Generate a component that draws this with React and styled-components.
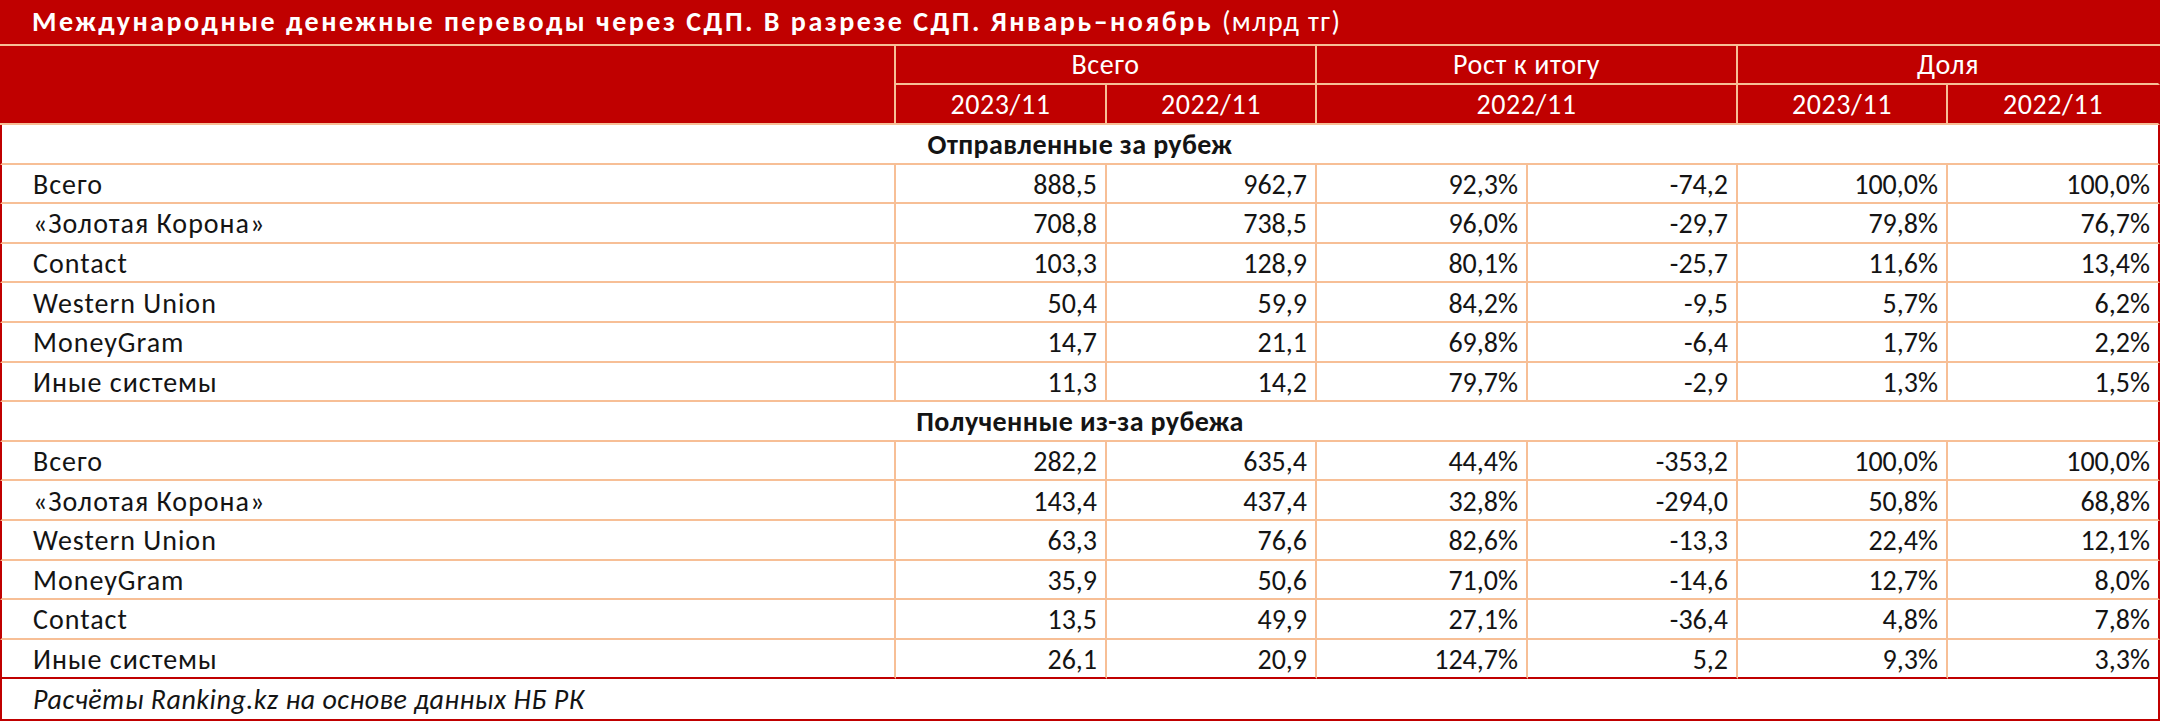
import React from "react";
import styled, { createGlobalStyle } from "styled-components";

const RED = "#c00000";
const PEACH = "#f7bf96";

const GlobalStyle = createGlobalStyle`
  html, body {
    margin: 0;
    padding: 0;
    background: #ffffff;
  }
`;

const Table = styled.table`
  width: 2160px;
  border-collapse: separate;
  border-spacing: 0;
  table-layout: fixed;
  font-family: Calibri, Carlito, "Open Sans", "Liberation Sans", sans-serif;
  font-size: 28px;
  color: #141414;
`;

const TitleCell = styled.th`
  box-sizing: border-box;
  height: 46px;
  padding: 0 0 2px 32px;
  background: ${RED};
  color: #ffffff;
  text-align: left;
  font-weight: 700;
  font-size: 28px;
  letter-spacing: 2.5px;
  border-bottom: 2px solid ${PEACH};
  white-space: nowrap;

  span {
    font-weight: 400;
    letter-spacing: 1.4px;
  }
`;

const HeadCell = styled.th`
  box-sizing: border-box;
  height: ${(p) => p.$h || 39}px;
  padding: 0;
  background: ${RED};
  color: #ffffff;
  font-weight: 400;
  letter-spacing: 0.6px;
  text-align: center;
  vertical-align: middle;
  border-right: 2px solid ${(p) => (p.$last ? RED : PEACH)};
  border-bottom: 2px solid ${PEACH};
`;

const SectionCell = styled.td`
  box-sizing: border-box;
  height: 39.6px;
  padding: 2px 0 0;
  font-weight: 700;
  letter-spacing: 0.4px;
  text-align: center;
  border-left: 2px solid ${RED};
  border-right: 2px solid ${RED};
  border-bottom: 2px solid ${PEACH};
`;

const LabelCell = styled.td`
  box-sizing: border-box;
  height: 39.6px;
  padding: 2px 0 0 31px;
  text-align: left;
  letter-spacing: 1px;
  white-space: nowrap;
  border-left: 2px solid ${RED};
  border-right: 2px solid ${PEACH};
  border-bottom: 2px solid ${(p) => (p.$end ? RED : PEACH)};
`;

const NumCell = styled.td`
  box-sizing: border-box;
  height: 39.6px;
  padding: 2px 8px 0 0;
  text-align: right;
  white-space: nowrap;
  border-right: 2px solid ${(p) => (p.$last ? RED : PEACH)};
  border-bottom: 2px solid ${(p) => (p.$end ? RED : PEACH)};
`;

const FootCell = styled.td`
  box-sizing: border-box;
  height: 42px;
  padding: 0 0 0 31px;
  font-style: italic;
  letter-spacing: 0.5px;
  text-align: left;
  border-left: 2px solid ${RED};
  border-right: 2px solid ${RED};
  border-bottom: 2px solid ${RED};
`;

const sent = [
  ["Всего", "888,5", "962,7", "92,3%", "-74,2", "100,0%", "100,0%"],
  ["«Золотая Корона»", "708,8", "738,5", "96,0%", "-29,7", "79,8%", "76,7%"],
  ["Contact", "103,3", "128,9", "80,1%", "-25,7", "11,6%", "13,4%"],
  ["Western Union", "50,4", "59,9", "84,2%", "-9,5", "5,7%", "6,2%"],
  ["MoneyGram", "14,7", "21,1", "69,8%", "-6,4", "1,7%", "2,2%"],
  ["Иные системы", "11,3", "14,2", "79,7%", "-2,9", "1,3%", "1,5%"],
];

const received = [
  ["Всего", "282,2", "635,4", "44,4%", "-353,2", "100,0%", "100,0%"],
  ["«Золотая Корона»", "143,4", "437,4", "32,8%", "-294,0", "50,8%", "68,8%"],
  ["Western Union", "63,3", "76,6", "82,6%", "-13,3", "22,4%", "12,1%"],
  ["MoneyGram", "35,9", "50,6", "71,0%", "-14,6", "12,7%", "8,0%"],
  ["Contact", "13,5", "49,9", "27,1%", "-36,4", "4,8%", "7,8%"],
  ["Иные системы", "26,1", "20,9", "124,7%", "5,2", "9,3%", "3,3%"],
];

function DataRows({ rows, end }) {
  return rows.map((row, i) => {
    const isEnd = end && i === rows.length - 1;
    return (
      <tr key={i}>
        <LabelCell $end={isEnd}>{row[0]}</LabelCell>
        {row.slice(1).map((v, j) => (
          <NumCell key={j} $end={isEnd} $last={j === 5}>
            {v}
          </NumCell>
        ))}
      </tr>
    );
  });
}

export default function App() {
  return (
    <>
      <GlobalStyle />
      <Table>
        <colgroup>
          <col style={{ width: 896 }} />
          <col style={{ width: 211 }} />
          <col style={{ width: 210 }} />
          <col style={{ width: 211 }} />
          <col style={{ width: 210 }} />
          <col style={{ width: 210 }} />
          <col />
        </colgroup>
        <thead>
          <tr>
            <TitleCell colSpan={7}>
              Международные денежные переводы через СДП. В разрезе СДП. Январь–ноябрь{" "}
              <span>(млрд тг)</span>
            </TitleCell>
          </tr>
          <tr>
            <HeadCell rowSpan={2} />
            <HeadCell colSpan={2}>Всего</HeadCell>
            <HeadCell colSpan={2}>Рост к итогу</HeadCell>
            <HeadCell colSpan={2} $last>
              Доля
            </HeadCell>
          </tr>
          <tr>
            <HeadCell $h={40}>2023/11</HeadCell>
            <HeadCell $h={40}>2022/11</HeadCell>
            <HeadCell $h={40} colSpan={2}>
              2022/11
            </HeadCell>
            <HeadCell $h={40}>2023/11</HeadCell>
            <HeadCell $h={40} $last>
              2022/11
            </HeadCell>
          </tr>
        </thead>
        <tbody>
          <tr>
            <SectionCell colSpan={7}>Отправленные за рубеж</SectionCell>
          </tr>
          <DataRows rows={sent} />
          <tr>
            <SectionCell colSpan={7}>Полученные из-за рубежа</SectionCell>
          </tr>
          <DataRows rows={received} end />
        </tbody>
        <tfoot>
          <tr>
            <FootCell colSpan={7}>Расчёты Ranking.kz на основе данных НБ РК</FootCell>
          </tr>
        </tfoot>
      </Table>
    </>
  );
}
